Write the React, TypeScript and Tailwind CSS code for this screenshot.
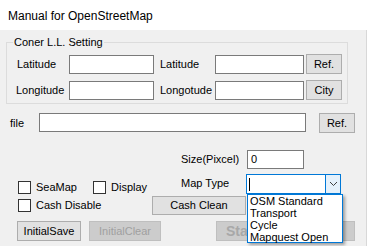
import React from "react";

const font = { fontFamily: '"Liberation Sans", Arial, sans-serif' };

function Btn({ w, h = 20, children, disabled = false, className = "" }: { w: string; h?: number; children: React.ReactNode; disabled?: boolean; className?: string }) {
  return (
    <div
      className={`${w} ${h === 20 ? "h-[20px]" : "h-[19px]"} shrink-0 flex items-center justify-center border ${
        disabled ? "bg-[#cccccc] border-[#bfbfbf] text-[#a0a0a0]" : "bg-[#e1e1e1] border-[#adadad] text-black"
      } ${className}`}
    >
      {children}
    </div>
  );
}

function Box({ w }: { w: string }) {
  return <div className={`${w} h-[19px] shrink-0 bg-white border border-[#7a7a7a]`} />;
}

function Check({ label }: { label: string }) {
  return (
    <div className="flex items-center">
      <div className="w-[13px] h-[13px] border border-[#333333] bg-white shrink-0" />
      <span className="ml-[5px] leading-[13px]">{label}</span>
    </div>
  );
}

export default function App() {
  return (
    <div className="w-[368px] h-[246px] overflow-hidden bg-white text-[11px] text-black" style={font}>
      <div className="h-[30px] pl-[8px] flex items-center text-[12px] pt-[1px]">Manual for OpenStreetMap</div>
      <div className="w-[367px] h-[216px] bg-[#f0f0f0] border-r border-[#d8d8d8] flex flex-col">
        {/* Group box */}
        <div className="relative mt-[12px] ml-[6px] w-[342px] h-[62px] border border-[#dcdcdc] pt-[11px] pl-[10px] flex flex-col gap-[6px]">
          <span className="absolute -top-[8px] left-[6px] px-[1px] bg-[#f0f0f0] leading-[14px]">Coner L.L. Setting</span>
          <div className="flex items-end h-[20px]">
            <span className="w-[52px] self-center">Latitude</span>
            <Box w="w-[85px]" />
            <span className="w-[61px] pl-[6px] self-center">Latitude</span>
            <Box w="w-[89px]" />
            <Btn w="w-[36px]" className="ml-[2px]">Ref.</Btn>
          </div>
          <div className="flex items-end h-[20px]">
            <span className="w-[52px] -ml-[1px] self-center">Longitude</span>
            <Box w="w-[85px] ml-[1px]" />
            <span className="w-[61px] pl-[6px] self-center">Longotude</span>
            <Box w="w-[89px]" />
            <Btn w="w-[36px]" className="ml-[2px]">City</Btn>
          </div>
        </div>

        {/* file row */}
        <div className="flex items-end h-[20px] mt-[9px] ml-[10px]">
          <span className="w-[29px] self-center">file</span>
          <div className="w-[267px] h-[19px] bg-white border border-[#7a7a7a] mb-[1px]" />
          <Btn w="w-[36px]" className="ml-[13px]">Ref.</Btn>
        </div>

        {/* Size row */}
        <div className="flex items-center h-[19px] mt-[17px] ml-[181px]">
          <span className="w-[66px]">Size(Pixcel)</span>
          <div className="w-[57px] h-[19px] bg-white border border-[#7a7a7a] flex items-center pl-[3px]">0</div>
        </div>

        {/* Map type row */}
        <div className="flex items-end h-[20px] mt-[5px] ml-[18px]">
          <div className="flex items-end">
            <div className="w-[75px]">
              <Check label="SeaMap" />
            </div>
            <Check label="Display" />
          </div>
          <span className="ml-[34px] w-[65px] self-center -mt-[2px]">Map Type</span>
          <div className="w-[95px] h-[20px] border border-[#0078d7] bg-white flex">
            <div className="flex-1 flex items-center pl-[2px]">
              <div className="w-[1px] h-[13px] bg-black" />
            </div>
            <div className="w-[15px] h-full bg-[#e5f1fb] border-l border-[#0078d7] flex items-center justify-center">
              <svg width="9" height="6" viewBox="0 0 9 6">
                <polyline points="1,1 4.5,4.5 8,1" fill="none" stroke="#404040" strokeWidth="1" />
              </svg>
            </div>
          </div>
        </div>

        {/* Cash row */}
        <div className="flex items-center h-[19px] mt-[2px] ml-[18px]">
          <div className="w-[134px]">
            <Check label="Cash Disable" />
          </div>
          <Btn w="w-[94px]" h={19}>Cash Clean</Btn>
        </div>

        {/* Buttons row */}
        <div className="relative flex items-center h-[20px] mt-[6px] ml-[17px]">
          <Btn w="w-[64px]">InitialSave</Btn>
          <Btn w="w-[72px]" disabled className="ml-[8px]">InitialClear</Btn>
          <Btn w="w-[139px]" disabled className="ml-[55px] justify-start pl-[9px]">
            <span className="text-[14px] font-bold text-[#a8a8a8]">Start</span>
          </Btn>

          {/* Dropdown list overlay */}
          <div className="absolute left-[230px] -top-[27px] w-[96px] h-[49px] bg-white border border-[#0078d7] shadow-[2px_2px_3px_rgba(0,0,0,0.35)] flex flex-col pl-[2px] text-[11px]">
            <span className="h-[12px] leading-[12px]">OSM Standard</span>
            <span className="h-[12px] leading-[12px]">Transport</span>
            <span className="h-[12px] leading-[12px]">Cycle</span>
            <span className="h-[12px] leading-[12px]">Mapquest Open</span>
          </div>
        </div>
      </div>
    </div>
  );
}
